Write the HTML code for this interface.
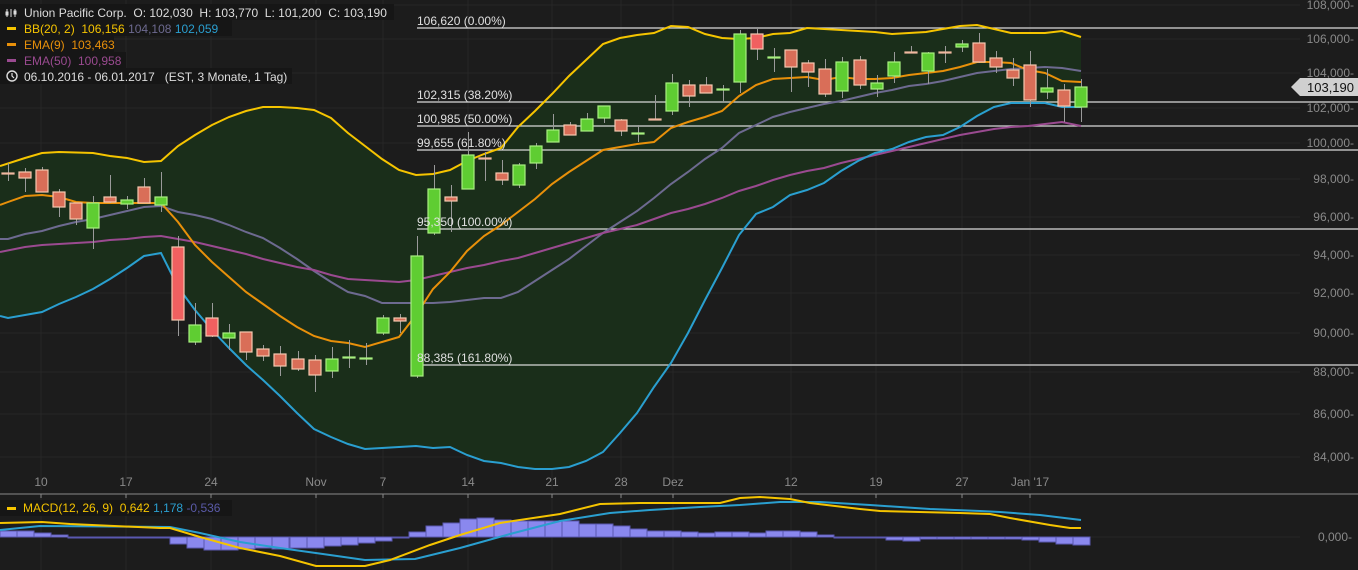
<!DOCTYPE html>
<html><head><meta charset="utf-8"><style>
html,body{margin:0;padding:0;background:#1c1c1c;}
svg{display:block;font-family:"Liberation Sans",sans-serif;}
svg text{white-space:pre;}
</style></head><body>
<svg id="c" width="1358" height="570" viewBox="0 0 1358 570" xmlns="http://www.w3.org/2000/svg">
<rect width="1358" height="570" fill="#1c1c1c"/>
<g id="grid" stroke="#262626" stroke-width="1"></g>
<path id="band" fill="#1a2e1a"/>
<g id="fib" stroke="#d8d8d8" stroke-width="1.3"></g>
<g id="lines" fill="none" stroke-width="2"></g>
<g id="candles"></g>
<g fill="#e0e0e0" font-size="12">
<text x="417" y="25">106,620 (0.00%)</text>
<text x="417" y="99">102,315 (38.20%)</text>
<text x="417" y="123">100,985 (50.00%)</text>
<text x="417" y="147">99,655 (61.80%)</text>
<text x="417" y="226">95,350 (100.00%)</text>
<text x="417" y="362">88,385 (161.80%)</text>
</g>
<g id="yax" fill="#8a8a8a" font-size="12" text-anchor="end"></g>
<path d="M1291,87 L1300,78 L1358,78 L1358,96 L1300,96 Z" fill="#d0d0d0"/>
<text x="1354" y="92" font-size="13" fill="#111" text-anchor="end">103,190</text>
<line x1="0" y1="494" x2="1358" y2="494" stroke="#8a8a8a" stroke-width="1"/>
<g id="xax" fill="#8a8a8a" font-size="12" text-anchor="middle"></g>
<g id="macd"></g>
<text x="1352" y="541" font-size="12" fill="#8a8a8a" text-anchor="end">0,000-</text>
<rect x="0" y="4" width="394" height="16" fill="#161616"/>
<rect x="0" y="20" width="232" height="16" fill="#161616"/>
<rect x="0" y="36" width="114" height="16" fill="#161616"/>
<rect x="0" y="52" width="126" height="16" fill="#161616"/>
<rect x="0" y="68" width="292" height="16" fill="#161616"/>
<g font-size="12">
<g stroke="#ddd" stroke-width="1"><line x1="7" y1="9" x2="7" y2="17"/><line x1="11" y1="9" x2="11" y2="17"/><line x1="15" y1="9" x2="15" y2="17"/><rect x="6" y="12" width="2" height="3" fill="#ddd"/><rect x="14" y="11" width="2" height="3" fill="#ddd"/></g>
<text x="24" y="17" fill="#ddd">Union Pacific Corp.  O: 102,030  H: 103,770  L: 101,200  C: 103,190</text>
<rect x="7" y="27" width="9" height="3" fill="#f5c400"/>
<text x="24" y="33" fill="#f5c400">BB(20, 2)  106,156 <tspan fill="#6d6a90">104,108</tspan> <tspan fill="#2a9fd0">102,059</tspan></text>
<rect x="7" y="43" width="9" height="3" fill="#e8900a"/>
<text x="24" y="49" fill="#e8900a">EMA(9)  103,463</text>
<rect x="7" y="59" width="9" height="3" fill="#9a4a90"/>
<text x="24" y="65" fill="#9a4a90">EMA(50)  100,958</text>
<circle cx="12" cy="76" r="5" fill="none" stroke="#ddd" stroke-width="1.4"/><path d="M12,73 V76 L14,78" stroke="#ddd" fill="none" stroke-width="1.2"/>
<text x="24" y="81" fill="#ddd">06.10.2016 - 06.01.2017   (EST, 3 Monate, 1 Tag)</text>
<rect x="0" y="500" width="232" height="16" fill="#161616"/>
<rect x="7" y="507" width="9" height="3" fill="#f5c400"/>
<text x="23" y="512" fill="#f5c400">MACD(12, 26, 9)  0,642 <tspan fill="#2a9fd0">1,178</tspan> <tspan fill="#5a5aa8">-0,536</tspan></text>
</g>
</svg>
<script>
const NS="http://www.w3.org/2000/svg";
function el(p,t,a){const e=document.createElementNS(NS,t);for(const k in a)e.setAttribute(k,a[k]);document.getElementById(p).appendChild(e);return e;}
const ys=[[5,"108,000-"],[39,"106,000-"],[73,"104,000-"],[108,"102,000-"],[143,"100,000-"],[179,"98,000-"],[217,"96,000-"],[255,"94,000-"],[293,"92,000-"],[333,"90,000-"],[372,"88,000-"],[414,"86,000-"],[457,"84,000-"]];
ys.forEach(([y,t])=>{el("grid","line",{x1:0,x2:1300,y1:y,y2:y});const tx=el("yax","text",{x:1354,y:y+4});tx.textContent=t;});
el("grid","line",{x1:0,x2:1300,y1:537,y2:537});
const xs=[[41,"10"],[126,"17"],[211,"24"],[316,"Nov"],[383,"7"],[468,"14"],[552,"21"],[621,"28"],[673,"Dez"],[791,"12"],[876,"19"],[962,"27"],[1030,"Jan '17"]];
xs.forEach(([x,t])=>{el("grid","line",{x1:x,x2:x,y1:0,y2:490});el("grid","line",{x1:x,x2:x,y1:497,y2:570});const tx=el("xax","text",{x:x,y:486});tx.textContent=t;el("xax","line",{x1:x,x2:x,y1:494,y2:498,stroke:"#8a8a8a"});});
const P=a=>a.map((p,i)=>(i?"L":"M")+p[0]+","+p[1]).join(" ");
const up=[[0,166],[25,158],[42,153],[59,152],[93,153],[110,156],[127,158],[144,162],[161,161],[178,146],[195,135],[212,125],[229,117],[246,111],[263,107],[280,107],[297,108],[314,110],[331,118],[348,133],[365,146],[382,159],[399,170],[416,175],[433,174],[450,170],[467,161],[484,154],[501,148],[518,127],[535,111],[552,94],[569,76],[586,60],[603,44],[620,38],[637,35],[654,33],[671,26],[688,27],[705,34],[722,38],[739,39],[756,38],[773,34],[790,33],[807,28],[824,29],[841,30],[858,31],[875,32],[892,34],[909,33],[926,32],[943,29],[960,26],[977,25],[994,29],[1011,33],[1045,33],[1062,31],[1081,37]];
const lo=[[0,316],[8,318],[25,315],[42,312],[59,304],[76,297],[93,289],[110,279],[127,268],[144,256],[161,253],[178,287],[195,310],[212,330],[229,348],[246,365],[263,380],[280,396],[297,413],[314,429],[331,437],[348,444],[365,449],[382,448],[399,447],[416,446],[433,448],[450,447],[467,455],[484,461],[501,463],[518,467],[535,469],[552,469],[569,467],[586,461],[603,452],[620,433],[637,413],[654,387],[671,363],[688,333],[705,300],[722,268],[739,235],[756,214],[773,207],[790,195],[807,190],[824,183],[841,171],[858,161],[875,153],[892,149],[909,142],[926,137],[943,135],[960,127],[977,116],[994,107],[1011,103],[1028,103],[1045,103],[1062,107],[1081,107]];
const mid=[[0,239],[8,239],[25,234],[42,231],[59,226],[76,222],[93,219],[110,215],[127,211],[144,207],[161,206],[178,212],[195,215],[212,219],[229,225],[246,232],[263,238],[280,248],[297,259],[314,271],[331,282],[348,292],[365,296],[382,303],[399,303],[433,303],[450,302],[467,300],[484,298],[501,298],[518,292],[535,281],[552,270],[569,259],[586,246],[603,233],[620,222],[637,211],[654,198],[671,184],[688,172],[705,159],[722,148],[739,133],[756,125],[773,117],[790,112],[807,108],[824,104],[841,101],[858,97],[875,93],[892,90],[909,86],[926,84],[943,81],[960,77],[977,73],[994,71],[1011,69],[1028,68],[1045,67],[1062,68],[1081,71]];
const e9=[[0,205],[8,202],[25,196],[42,195],[59,197],[76,202],[93,203],[161,203],[178,222],[195,245],[212,262],[229,277],[246,292],[263,304],[280,316],[297,327],[314,336],[331,341],[348,343],[365,347],[382,342],[399,337],[416,315],[433,289],[450,272],[467,251],[484,236],[501,225],[518,212],[535,199],[552,184],[569,172],[586,161],[603,150],[620,147],[637,144],[654,142],[671,128],[688,122],[705,117],[722,111],[739,96],[756,85],[773,79],[790,78],[807,77],[824,80],[841,77],[858,79],[875,79],[892,78],[909,75],[926,73],[943,71],[960,67],[977,62],[994,62],[1011,63],[1028,70],[1045,73],[1062,81],[1081,82]];
const e50=[[0,252],[25,247],[42,245],[59,244],[76,243],[93,242],[110,240],[127,239],[144,237],[161,236],[178,239],[195,242],[212,246],[229,250],[246,254],[263,259],[280,263],[297,267],[314,270],[331,275],[348,279],[365,280],[382,281],[399,282],[416,280],[433,276],[450,272],[467,268],[484,265],[501,261],[518,258],[535,253],[552,248],[569,243],[586,238],[603,233],[620,229],[637,225],[654,219],[671,213],[688,209],[705,204],[722,198],[739,191],[756,186],[773,180],[790,175],[807,171],[824,168],[841,163],[858,159],[875,155],[892,151],[909,147],[926,143],[943,139],[960,135],[977,132],[994,129],[1011,127],[1028,126],[1045,124],[1062,122],[1081,126]];
document.getElementById("band").setAttribute("d",P(up)+" "+P(lo.slice().reverse()).replace("M","L")+" Z");
[28,102,126,150,229,365].forEach(y=>el("fib","line",{x1:417,x2:1358,y1:y,y2:y}));
[[mid,"#6d6a90"],[e50,"#9a4a90"],[e9,"#e8900a"],[lo,"#2a9fd0"],[up,"#f5c400"]].forEach(([a,c])=>el("lines","path",{d:P(a),stroke:c}));
const C=[
["l",173,173,163,181],["d",172,178,168,192],["d",170,192,167,192],["d",192,207,189,217],["d",203,219,203,225],["u",228,203,196,249],["d",197,202,175,203],["u",204,200,196,209],["d",187,203,178,203],["u",205,197,172,212],
["r",247,320,236,336],["u",342,325,303,345],["r",318,336,303,337],["u",338,333,324,350],["d",332,352,332,360],["d",349,356,345,361],["d",354,366,346,376],["d",359,369,351,371],["d",360,375,355,392],["u",371,359,347,378],
["u",358,357,340,368],["u",359,358,343,365],["u",333,318,315,335],["d",318,321,314,333],["u",376,256,236,378],["u",233,189,165,235],["d",197,201,185,232],["u",189,155,132,189],["l",158,158,152,181],["d",173,180,160,185],
["u",185,165,163,188],["u",163,146,143,169],["u",142,130,114,142],["d",125,135,122,135],["u",131,119,113,131],["u",118,106,106,123],["d",120,131,119,136],["u",134,133,125,142],["l",119,120,95,120],["u",111,83,74,115],
["d",85,96,80,107],["d",85,93,77,93],["u",90,89,85,102],["u",82,34,30,93],["r",34,49,29,60],["u",58,57,48,72],["d",50,67,50,92],["d",63,72,60,87],["d",69,94,59,97],["u",91,62,57,98],
["d",60,85,56,89],["u",89,83,75,97],["u",76,62,52,83],["l",52,53,46,53],["u",71,53,52,84],["l",52,52,46,63],["u",47,44,40,52],["d",43,62,33,63],["d",58,67,51,73],["d",70,78,58,86],
["d",65,100,51,107],["u",92,88,69,99],["d",90,106,84,122],["u",107,87,79,122]];
C.forEach((c,i)=>{const x=Math.round(8+17.03*i);const [t,o,cl,h,l]=c;const top=Math.min(o,cl),bot=Math.max(o,cl);
el("candles","line",{x1:x+0.5,x2:x+0.5,y1:h,y2:l,stroke:"#9a9a9a","stroke-width":1});
let fill,st;if(t=="u"){fill="#5fcd32";st="#a8f080";}else if(t=="d"){fill="#d96e58";st="#f5c8b0";}else if(t=="r"){fill="#f06060";st="#f5c8b0";}else{fill="#f0b8a0";st="#f0b8a0";}
el("candles","rect",{x:x-6,y:top,width:12,height:Math.max(bot-top,1),fill:fill,stroke:st,"stroke-width":1.2});});
const H=[531,531,533,535,537,537,537,537,537,537,544,548,550,550,549,548,549,548,548,546,545,543,541,538,532,526,523,519,518,520,521,521,521,521,524,524,526,529,531,531,532,533,532,532,533,531,531,532,535,537,538,538,540,541,539,539,539,539,539,539,540,542,544,545];
H.forEach((y,i)=>{const x=Math.round(17.03*i);const t=Math.min(y,537),b=Math.max(y,537);el("macd","rect",{x:x,y:t,width:17,height:Math.max(b-t,1),fill:"#8a88ee",stroke:"#5a58b0","stroke-width":1});});
const ml=[[0,523],[42,522],[70,524],[160,528],[170,528],[200,537],[240,548],[280,556],[316,566],[365,566],[390,560],[430,545],[460,535],[500,523],[560,514],[600,504],[640,503],[720,503],[740,498],[760,497],[790,499],[810,503],[860,509],[880,511],[960,513],[990,514],[1010,518],[1050,525],[1070,528],[1081,528]];
const sl=[[0,530],[40,526],[170,527],[200,533],[240,542],[280,548],[330,555],[365,560],[415,559],[460,548],[510,534],[560,521],[610,513],[650,510],[700,507],[740,505],[780,502],[820,502],[870,505],[930,509],[980,511],[1000,512],[1040,515],[1081,520]];
el("macd","path",{d:P(sl),stroke:"#2a9fd0",fill:"none","stroke-width":2});
el("macd","path",{d:P(ml),stroke:"#f5c400",fill:"none","stroke-width":2});
</script>
</body></html>
